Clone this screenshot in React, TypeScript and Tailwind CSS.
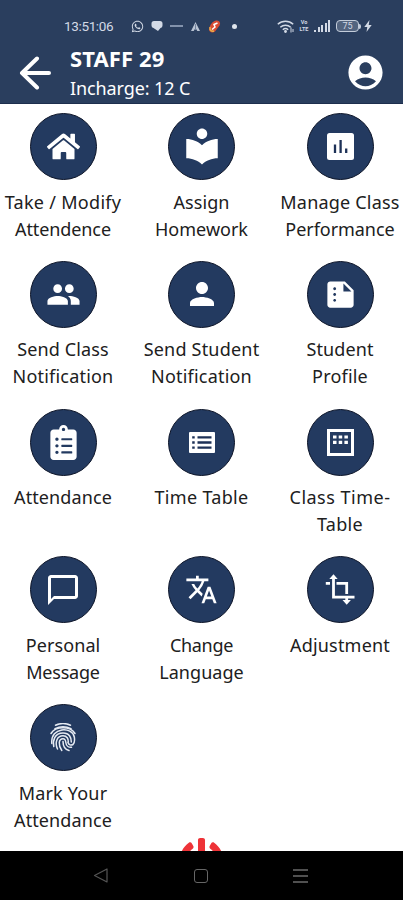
import type { ReactNode } from 'react';
import { FaClipboardList, FaHome, FaPowerOff, FaWhatsapp } from 'react-icons/fa';
import {
  MdAccountCircle,
  MdChatBubbleOutline,
  MdLocalLibrary,
  MdPeople,
  MdPerson,
  MdSummarize,
  MdTranslate,
} from 'react-icons/md';

type Line = { text: string; className: string };
type Item = { id: string; icon: ReactNode; lines: Line[] };

function ChartIcon() {
  return (
    <svg viewBox="0 0 27 27" className="h-[27px] w-[27px]">
      <rect width="27" height="27" rx="2.500" fill="white" />
      <path d="M8 11.500V20M13.600 7v13M19.200 15.500V20" stroke="#1d3157" strokeWidth="2.300" />
    </svg>
  );
}

function ListBoxIcon() {
  return (
    <svg viewBox="0 0 26 21" className="h-[21px] w-[26px]">
      <rect width="26" height="21" rx="1" fill="white" />
      <path d="M3.200 5.400h2.500M3.200 10.500h2.500M3.200 15.600h2.500M8.500 5.400h14M8.500 10.500h14M8.500 15.600h14" stroke="#1d3157" strokeWidth="2.300" />
    </svg>
  );
}

function CalendarIcon() {
  return (
    <svg viewBox="0 0 27 27" className="h-[27px] w-[27px]">
      <rect x="1.500" y="1.500" width="24" height="24" fill="none" stroke="white" strokeWidth="3" />
      <path d="M6 8h3.500M11.700 8h3.500M17.400 8h3.500M6 13.300h3.500M11.700 13.300h3.500M17.400 13.300h3.500" stroke="white" strokeWidth="3.200" />
    </svg>
  );
}

function TransformIcon() {
  return (
    <svg viewBox="0 0 30 31" className="h-[31px] w-[30px]" fill="none" stroke="white" strokeWidth="2.800">
      <path d="M8.500 3v20.200H29.500M.8 9.300H5M11.500 9.300h10.200V20M21.700 24v4" />
      <path d="M8.500 .3 12.700 5H4.300zM21.700 30.700 17.500 26h8.400z" fill="white" stroke="none" />
    </svg>
  );
}

function FingerprintIcon() {
  return (
    <svg viewBox="0 0 26 29" className="h-[29px] w-[26px]" fill="none" stroke="#e6ebf3" strokeWidth="1.500" strokeLinecap="round">
      <path d="M5.500 2.200C10 .2 16 .2 20.500 2.200M5 5.600c5-2.400 11-2.400 16 0" />
      <path d="M1 10.500C5.500 2.800 20.500 2.800 25 10.500" />
      <path d="M1.800 20.500C.3 3.500 22.500 3.500 24.300 14c.5 3 .3 6-1.300 7.500-2 1.300-4.500.3-5-2" />
      <path d="M3.800 23.500C2.500 18 4.500 10 13 10c6.500 0 8.500 5 8.300 9" />
      <path d="M7.500 26C4.500 19.500 7 12.800 13 12.800c4 0 5.500 3.200 5.300 6.200" />
      <path d="M11.800 27.500c-3.800-5.500-3.300-11.800 1.200-11.800 2.500 0 2.700 2 2.900 4 .3 3 2.600 4.800 5.600 4.500" />
      <path d="M13 18.500c0 4.700 2 8 6 9" />
    </svg>
  );
}

const items: Item[] = [
  { id: '1', icon: <FaHome className="h-[33px] w-[33px]" />, lines: [{ text: 'Take / Modify', className: 'tracking-[0.3px]' }, { text: 'Attendence', className: 'tracking-[-0.1px]' }] },
  { id: '2', icon: <MdLocalLibrary className="mb-px h-[42px] w-[42px]" />, lines: [{ text: 'Assign', className: 'tracking-[0.1px]' }, { text: 'Homework', className: 'tracking-[0px]' }] },
  { id: '3', icon: <ChartIcon />, lines: [{ text: 'Manage Class', className: 'tracking-[0.2px]' }, { text: 'Performance', className: 'tracking-[-0.05px]' }] },
  { id: '4', icon: <MdPeople className="h-[35px] w-[35px]" />, lines: [{ text: 'Send Class', className: 'tracking-[0.1px]' }, { text: 'Notification', className: 'tracking-[0.2px]' }] },
  { id: '5', icon: <MdPerson className="h-[36px] w-[36px]" />, lines: [{ text: 'Send Student', className: 'tracking-[0.2px]' }, { text: 'Notification', className: 'tracking-[0.2px]' }] },
  { id: '6', icon: <MdSummarize className="h-[35px] w-[35px]" />, lines: [{ text: 'Student', className: 'tracking-[0.1px]' }, { text: 'Profile', className: 'tracking-[0.2px]' }] },
  { id: '7', icon: <FaClipboardList className="h-[35px] w-[35px]" />, lines: [{ text: 'Attendance', className: 'tracking-[0.1px]' }] },
  { id: '8', icon: <ListBoxIcon />, lines: [{ text: 'Time Table', className: 'tracking-[0.3px]' }] },
  { id: '9', icon: <CalendarIcon />, lines: [{ text: 'Class Time-', className: 'tracking-[0.5px]' }, { text: 'Table', className: 'tracking-[0.3px]' }] },
  { id: '10', icon: <MdChatBubbleOutline className="h-[36px] w-[36px]" />, lines: [{ text: 'Personal', className: 'tracking-[0.1px]' }, { text: 'Message', className: 'tracking-[-0.2px]' }] },
  { id: '11', icon: <MdTranslate className="h-[33px] w-[33px]" />, lines: [{ text: 'Change', className: 'tracking-[-0.3px]' }, { text: 'Language', className: 'tracking-[0.05px]' }] },
  { id: '12', icon: <TransformIcon />, lines: [{ text: 'Adjustment', className: 'tracking-[0.2px]' }] },
  { id: '13', icon: <FingerprintIcon />, lines: [{ text: 'Mark Your', className: 'tracking-[0.2px]' }, { text: 'Attendance', className: 'tracking-[0.1px]' }] },
];

function StatusBar() {
  return (
    <div className="flex h-[14px] items-center pl-16 text-[#d3dae6]">
      <span className="w-[67px] font-['Roboto'] text-[13.5px] leading-[14px] tracking-[-0.35px]">13:51:06</span>
      <FaWhatsapp className="h-[13px] w-[13px]" />
      <svg viewBox="0 0 12 12" className="ml-[7px] h-3 w-3" fill="currentColor">
        <path d="M3 1h6a2.500 2.500 0 0 1 2.500 2.500v2A2.500 2.500 0 0 1 9.500 8L7 11 2.500 8A2.500 2.500 0 0 1 .5 5.500v-2A2.500 2.500 0 0 1 3 1z" />
      </svg>
      <span className="ml-[7px] h-[1.5px] w-[13px] bg-[#8292ac]" />
      <svg viewBox="0 0 11 11" className="ml-[7px] h-[11px] w-[11px]">
        <path d="M5.500 1 10 10H7.300L5.500 7 3.700 10H1z" fill="#b9c3d3" />
        <path d="M5.500 3v6" stroke="#71819c" />
      </svg>
      <svg viewBox="0 0 13 13" className="ml-[7px] h-[13px] w-[13px]">
        <path d="M8 .5c3-.5 5 2 3.500 5L7 11.500c-3 2-6 .5-6-2.500C2 5 4 1.500 8 .5z" fill="#d94b32" />
        <path d="M2 7c-.5 4 2 4.500 4 4" fill="none" stroke="#e5b34e" strokeWidth="1.500" />
        <path d="M9.500 3 6 4.500 7 7 4 9.500" fill="none" stroke="white" strokeWidth="1.500" />
      </svg>
      <span className="ml-[11px] h-[5px] w-[5px] rounded-full bg-[#dfe5ed]" />
      <svg viewBox="0 0 17 13" className="ml-[40px] h-[13px] w-[17px]" fill="none" stroke="currentColor" strokeWidth="1.500">
        <path d="M.8 4.200c4.400-4 11-4 15.400 0M3.300 7.200c3-2.700 7.400-2.700 10.400 0M5.800 9.700c1.600-1.400 3.800-1.400 5.400 0" />
        <circle cx="8.500" cy="11.500" r=".7" fill="currentColor" />
        <path d="M14 7.500v5M16 9v3" strokeWidth="1" />
      </svg>
      <span className="ml-[5px] flex w-[10px] flex-col items-center font-['Roboto'] text-[5.500px] font-bold leading-[7px]">
        <span>Vo</span>
        <span>LTE</span>
      </span>
      <span className="ml-[5px] flex h-[12px] items-end gap-[1.5px]">
        <span className="h-[2px] w-[2px] bg-[#d3dae6]" />
        <span className="h-[5px] w-[2px] bg-[#d3dae6]" />
        <span className="h-[7px] w-[2px] bg-[#d3dae6]" />
        <span className="h-[9px] w-[2px] bg-[#d3dae6]" />
        <span className="h-[12px] w-[2px] bg-[#d3dae6]" />
      </span>
      <span className="ml-[6px] flex h-[12px] w-[23px] items-center justify-center rounded-[4px] border border-[#c3ccda] bg-[#53647f] font-['Roboto'] text-[9px] leading-none">75</span>
      <span className="h-[5px] w-[2px] rounded-r bg-[#c3ccda]" />
      <svg viewBox="0 0 8 12" className="ml-[3px] h-3 w-2" fill="currentColor">
        <path d="M5.500 0 .3 7h3L2.500 12 7.700 5h-3z" />
      </svg>
    </div>
  );
}

function MenuItem({ item }: { item: Item }) {
  return (
    <div className="flex h-[147.7px] flex-col items-center">
      <div className="flex h-[67px] w-[67px] shrink-0 items-center justify-center rounded-full border border-[#0d1529] bg-[#233a60] text-white">
        {item.icon}
      </div>
      <p className="mt-[8.5px] text-center text-[18px] leading-[27px] text-[#202020]">
        {item.lines.map((line) => (
          <span key={line.text} className={`block whitespace-nowrap ${line.className}`}>{line.text}</span>
        ))}
      </p>
    </div>
  );
}

export default function App() {
  return (
    <div className="flex h-[900px] w-[403px] flex-col overflow-hidden bg-white font-['Noto_Sans',sans-serif]">
      <header className="h-[104px] shrink-0 border-b border-[#1d2e4d] bg-[#2a3e5e] pt-[19px] text-white">
        <StatusBar />
        <div className="flex items-start">
          <svg viewBox="0 0 32 34" className="ml-[19px] mt-[23px] h-[34px] w-[32px]" fill="none" stroke="white" strokeWidth="4" strokeLinecap="round" strokeLinejoin="round">
            <path d="M18 2.500 3 17l15 14.500M3 17h27" />
          </svg>
          <div className="ml-[19px] mt-[11px]">
            <h1 className="text-[22px] font-bold leading-[29px] tracking-[0.1px]">STAFF 29</h1>
            <p className="mt-px text-[18px] leading-[29px] tracking-[-0.1px]">Incharge: 12 C</p>
          </div>
          <MdAccountCircle className="ml-auto mr-[17px] mt-[19px] h-[41px] w-[41px]" />
        </div>
      </header>

      <main className="-mx-[6.25px] min-h-0 flex-1 overflow-hidden pt-[9.25px]">
        <div className="grid h-[724.75px] grid-cols-3">
          {items.map((item) => (
            <MenuItem key={item.id} item={item} />
          ))}
        </div>
        <FaPowerOff className="mx-auto h-[45px] w-[45px] text-[#ee3338]" />
      </main>

      <nav className="flex h-[49px] shrink-0 items-center bg-black pl-[93px]">
        <svg viewBox="0 0 15 15" className="h-[15px] w-[15px]" fill="none" stroke="#555" strokeWidth="1.200" strokeLinejoin="round">
          <path d="M14 1v13L1.500 7.500z" />
        </svg>
        <span className="ml-[86px] h-[14px] w-[14px] rounded-[3px] border border-[#666]" />
        <span className="ml-[85px] flex w-[15px] flex-col gap-[4px]">
          <span className="h-[2px] bg-[#505050]" />
          <span className="h-[2px] bg-[#505050]" />
          <span className="h-[2px] bg-[#505050]" />
        </span>
      </nav>
    </div>
  );
}
